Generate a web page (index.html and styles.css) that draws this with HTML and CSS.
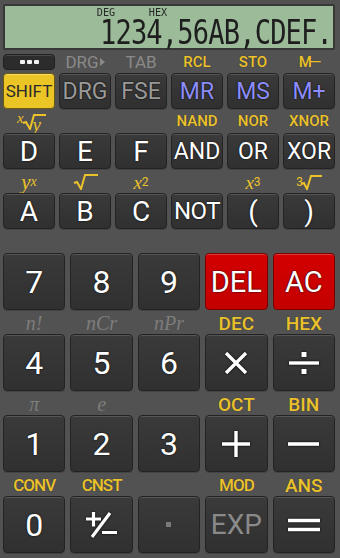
FILE: index.html
```html
<!DOCTYPE html>
<html>
<head>
<meta charset="utf-8">
<link rel="stylesheet" href="styles.css">
</head>
<body>
<div class="calc">
  <div class="display">
    <div class="flags"><span class="flag deg">DEG</span><span class="flag hex">HEX</span></div>
    <div class="readout"><span class="num">1234,56AB,CDEF.</span></div>
  </div>

  <div class="pad6">
    <div class="cell"><div class="lbl first"><div class="menu"><i></i><i></i><i></i></div></div><div class="key shift">SHIFT</div></div>
    <div class="cell"><div class="lbl first gray">DRG<svg class="tri" width="5" height="8" viewBox="0 0 5 8"><path d="M0 0 L5 4 L0 8Z" fill="#8a8a8a"/></svg></div><div class="key dim">DRG</div></div>
    <div class="cell"><div class="lbl first gray">TAB</div><div class="key dim">FSE</div></div>
    <div class="cell"><div class="lbl first yel">RCL</div><div class="key mem">MR</div></div>
    <div class="cell"><div class="lbl first yel">STO</div><div class="key mem">MS</div></div>
    <div class="cell"><div class="lbl first yel mminus">M—</div><div class="key mem">M+</div></div>

    <div class="cell"><div class="lbl math"><span class="xroot"><i class="sx">x</i><svg width="24" height="16" viewBox="0 0 24 16"><path d="M1 9 L4 8 L8 15 L12 1 H24" fill="none" stroke="#ecc22a" stroke-width="2"/></svg><i class="ry">y</i></span></div><div class="key hexk">D</div></div>
    <div class="cell"><div class="lbl"></div><div class="key hexk">E</div></div>
    <div class="cell"><div class="lbl"></div><div class="key hexk">F</div></div>
    <div class="cell"><div class="lbl yel">NAND</div><div class="key logic">AND</div></div>
    <div class="cell"><div class="lbl yel">NOR</div><div class="key logic">OR</div></div>
    <div class="cell"><div class="lbl yel">XNOR</div><div class="key logic">XOR</div></div>

    <div class="cell"><div class="lbl math yx"><i>y</i><sup><i>x</i></sup></div><div class="key hexk">A</div></div>
    <div class="cell"><div class="lbl math"><svg width="25" height="16" viewBox="0 0 25 16"><path d="M1 9 L4 8 L8 15 L12 1 H25" fill="none" stroke="#ecc22a" stroke-width="2"/></svg></div><div class="key hexk">B</div></div>
    <div class="cell"><div class="lbl math"><i>x</i><sup>2</sup></div><div class="key hexk">C</div></div>
    <div class="cell"><div class="lbl"></div><div class="key logic not">NOT</div></div>
    <div class="cell"><div class="lbl math"><i>x</i><sup>3</sup></div><div class="key hexk">(</div></div>
    <div class="cell"><div class="lbl math"><sup class="pre">3</sup><svg width="22" height="15" viewBox="0 0 22 15"><path d="M1 9 L4 8 L7 14 L11 1 H22" fill="none" stroke="#ecc22a" stroke-width="2"/></svg></div><div class="key hexk">)</div></div>
  </div>

  <div class="pad5">
    <div class="cell"><div class="lbl"></div><div class="key big">7</div></div>
    <div class="cell"><div class="lbl"></div><div class="key big">8</div></div>
    <div class="cell"><div class="lbl"></div><div class="key big">9</div></div>
    <div class="cell"><div class="lbl"></div><div class="key big red">DEL</div></div>
    <div class="cell"><div class="lbl"></div><div class="key big red">AC</div></div>

    <div class="cell"><div class="lbl ital">n!</div><div class="key big">4</div></div>
    <div class="cell"><div class="lbl ital">nCr</div><div class="key big">5</div></div>
    <div class="cell"><div class="lbl ital">nPr</div><div class="key big">6</div></div>
    <div class="cell"><div class="lbl yel bl">DEC</div><div class="key big"><svg width="26" height="22" viewBox="0 0 26 22"><path d="M3 1 L23 21 M23 1 L3 21" stroke="#fff" stroke-width="3.4"/></svg></div></div>
    <div class="cell"><div class="lbl yel bl">HEX</div><div class="key big"><svg width="32" height="24" viewBox="0 0 32 24"><path d="M1 12 H31" stroke="#fff" stroke-width="3.4"/><rect x="13.5" y="1" width="5" height="5" fill="#fff"/><rect x="13.5" y="18" width="5" height="5" fill="#fff"/></svg></div></div>

    <div class="cell"><div class="lbl ital">π</div><div class="key big">1</div></div>
    <div class="cell"><div class="lbl ital">e</div><div class="key big">2</div></div>
    <div class="cell"><div class="lbl"></div><div class="key big">3</div></div>
    <div class="cell"><div class="lbl yel bl">OCT</div><div class="key big"><svg width="28" height="26" viewBox="0 0 28 26"><path d="M0 13 H28 M14 0 V26" stroke="#fff" stroke-width="3.4"/></svg></div></div>
    <div class="cell"><div class="lbl yel bl">BIN</div><div class="key big"><svg width="31" height="4" viewBox="0 0 31 4"><path d="M0 2 H31" stroke="#fff" stroke-width="3.6"/></svg></div></div>

    <div class="cell"><div class="lbl yel bl cond">CONV</div><div class="key big">0</div></div>
    <div class="cell"><div class="lbl yel bl cond">CNST</div><div class="key big"><svg width="33" height="27" viewBox="0 0 33 27"><path d="M1 8 H16 M8.5 1 V15.5 M7 26 L25 2 M17 21.5 H32" stroke="#fff" stroke-width="3.2"/></svg></div></div>
    <div class="cell"><div class="lbl"></div><div class="key big"><span class="dot"></span></div></div>
    <div class="cell"><div class="lbl yel bl cond">MOD</div><div class="key big exp">EXP</div></div>
    <div class="cell"><div class="lbl yel bl">ANS</div><div class="key big"><svg width="32" height="14" viewBox="0 0 32 14"><path d="M0 2.5 H32 M0 11.5 H32" stroke="#fff" stroke-width="3.6"/></svg></div></div>
  </div>
</div>
</body>
</html>
```

FILE: styles.css
```css
* { box-sizing: border-box; }
html, body { margin: 0; padding: 0; }
body {
  width: 340px;
  height: 558px;
  overflow: hidden;
  background: #525252;
  font-family: Roboto, "Liberation Sans", sans-serif;
}
.calc {
  padding: 4px 5px 0 3px;
}
.display {
  height: 46px;
  background: #9cbb99;
  border: 2px solid #383838;
  border-radius: 2px;
  display: flex;
  flex-direction: column;
}
.flags {
  height: 12px;
  display: flex;
  align-items: flex-end;
}
.flag {
  font-family: "DejaVu Sans Mono", monospace;
  font-size: 11px;
  line-height: 10px;
  color: #262626;
  transform: scaleX(0.92);
}
.deg { margin-left: 91px; }
.hex { margin-left: 32px; }
.readout {
  height: 30px;
  display: flex;
  justify-content: flex-end;
  padding-right: 1px;
}
.num {
  display: inline-block;
  font-family: "DejaVu Sans Mono", monospace;
  font-size: 33px;
  line-height: 30px;
  color: #1e1e1e;
  letter-spacing: -1px;
  transform: scaleX(0.82);
  transform-origin: right center;
  white-space: nowrap;
}
.pad6 {
  display: grid;
  grid-template-columns: repeat(6, 1fr);
  column-gap: 4px;
}
.pad5 {
  display: grid;
  grid-template-columns: repeat(5, 1fr);
  column-gap: 5px;
}
.cell {
  display: flex;
  flex-direction: column;
}
.lbl {
  height: 24px;
  display: flex;
  align-items: center;
  justify-content: center;
  font-size: 16px;
  line-height: 1;
  white-space: nowrap;
}
.lbl.first { height: 23px; padding-top: 1px; }
.gray { color: #8a8a8a; font-size: 17px; }
.tri { margin-left: 1px; }
.yel {
  color: #ecc22a;
  font-size: 15px;
  font-weight: 500;
  text-shadow: 0 0 1px #333;
}
.mminus { letter-spacing: -2px; }
.bl { font-size: 19px; padding-top: 3px; }
.cond { font-size: 17px; letter-spacing: -1px; }
.ital {
  font-family: "Liberation Serif", serif;
  font-style: italic;
  color: #7d7d7d;
  font-size: 20px;
  padding-top: 2px;
}
.math {
  font-family: "Liberation Serif", serif;
  color: #ecc22a;
  font-size: 19px;
  padding-top: 2px;
}
.math.yx { font-size: 21px; }
.math sup { font-size: 12px; vertical-align: 6px; font-family: Roboto, sans-serif; }
.math sup i { font-family: "Liberation Serif", serif; font-size: 14px; }
.math .pre { margin-right: -3px; }
.xroot { display: flex; align-items: center; }
.xroot .sx { font-size: 15px; margin-right: -2px; margin-top: -7px; }
.xroot .ry { font-size: 19px; margin-left: -13px; margin-top: 5px; }

.menu {
  width: 100%;
  height: 16px;
  background: #2c2c2c;
  border: 1px solid #1f1f1f;
  border-radius: 4px;
  box-shadow: inset 0 1px 0 #474747;
  display: flex;
  align-items: center;
  justify-content: center;
  gap: 2px;
}
.menu i {
  width: 5px;
  height: 4px;
  background: #f2f2f2;
  border-radius: 1px;
}

.key {
  height: 36px;
  border-radius: 4px;
  background: linear-gradient(#3a3a3a, #303030);
  border: 1px solid #232323;
  box-shadow: inset 0 1px 0 #555555, 0 1px 0 #444;
  display: flex;
  align-items: center;
  justify-content: center;
  color: #fff;
  font-size: 22px;
  text-shadow: 0 0 2px #000;
  white-space: nowrap;
}
.shift {
  background: #ebc426;
  border-color: #6a5a10;
  box-shadow: inset 0 1px 0 #f6dc6a;
  color: #2a2a2a;
  font-size: 17px;
  text-shadow: none;
}
.dim { color: #9a9a9a; font-size: 23px; }
.mem { color: #8c8cfa; font-size: 23px; }
.hexk { font-size: 28px; }
.logic { font-size: 23px; }
.not { font-size: 24px; letter-spacing: -0.5px; }
.big { height: 57px; font-size: 32px; }
.red {
  background: linear-gradient(#d30000, #c40000);
  border-color: #7a0000;
  box-shadow: inset 0 1px 0 #e23a3a;
  font-size: 29px;
}
.exp { color: #8a8a8a; font-size: 28px; text-shadow: none; }
.dot {
  width: 5px;
  height: 5px;
  background: #7a7a7a;
}
.key svg { filter: drop-shadow(0 0 1px #000); }
```
